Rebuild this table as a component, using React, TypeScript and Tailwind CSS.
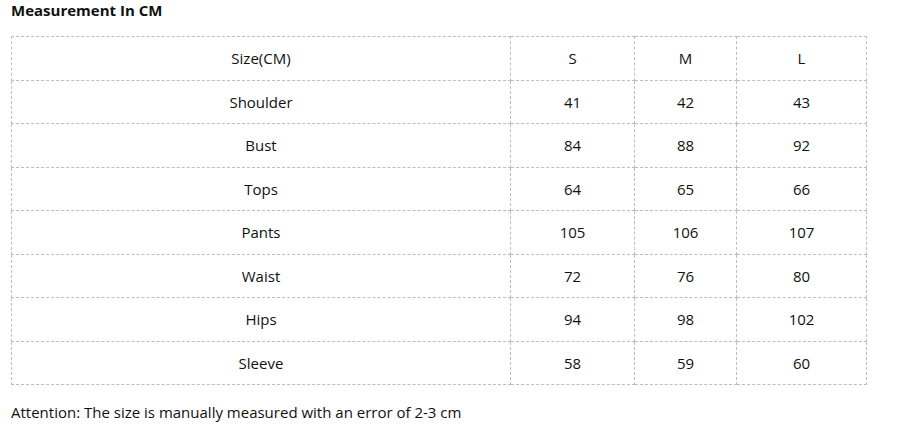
import React from 'react';

const rows: [string, string, string, string][] = [
    ['Size(CM)', 'S', 'M', 'L'],
    ['Shoulder', '41', '42', '43'],
    ['Bust', '84', '88', '92'],
    ['Tops', '64', '65', '66'],
    ['Pants', '105', '106', '107'],
    ['Waist', '72', '76', '80'],
    ['Hips', '94', '98', '102'],
    ['Sleeve', '58', '59', '60'],
];

const widths = ['w-[499px]', 'w-[124px]', 'w-[102px]', 'w-[130px]'];

export default function App() {
    return (
        <div className="w-[924px] h-[436px] bg-white text-[#111] font-['Open_Sans',sans-serif] text-[15px]">
            <div className="pl-[11px] pt-[1px] h-[36px] text-[15px] font-bold leading-[18px]">Measurement In CM</div>
            <table className="ml-[11px] table-fixed border-collapse w-[856px]">
                <tbody>
                    {rows.map((r, i) => (
                        <tr key={i} className="h-[43.5px]">
                            {r.map((c, j) => (
                                <td key={j} className={`${widths[j]} border border-dashed border-[#bdbdbd] text-center p-0 align-middle`}>
                                    {c}
                                </td>
                            ))}
                        </tr>
                    ))}
                </tbody>
            </table>
            <p className="pl-[11px] pt-[17px] leading-[20px]">Attention: The size is manually measured with an error of 2-3 cm</p>
        </div>
    );
}
